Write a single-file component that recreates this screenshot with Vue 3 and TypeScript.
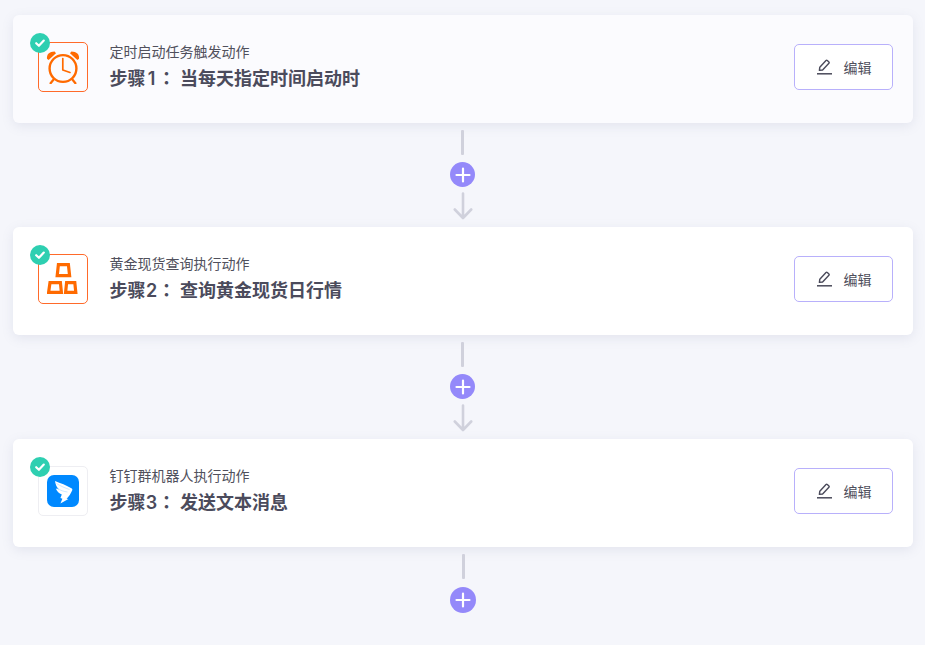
<script setup lang="ts">
interface Step {
  sub: string
  num: string
  title: string
  icon: 'clock' | 'gold' | 'ding'
  tint?: boolean
  arrow: boolean
}
const steps: Step[] = [
  { sub: '定时启动任务触发动作', num: '1', title: '当每天指定时间启动时', icon: 'clock', tint: true, arrow: true },
  { sub: '黄金现货查询执行动作', num: '2', title: '查询黄金现货日行情', icon: 'gold', arrow: true },
  { sub: '钉钉群机器人执行动作', num: '3', title: '发送文本消息', icon: 'ding', arrow: false },
]
</script>

<template>
  <main class="page">
    <template v-for="s in steps" :key="s.num">
      <section class="card" :class="{ tint: s.tint }">
        <div class="icon-wrap">
          <div class="icon-box" :class="{ plain: s.icon === 'ding' }">
            <svg v-if="s.icon === 'clock'" width="34" height="34" viewBox="0 0 34 34" fill="none" stroke="#ff6a00">
              <circle cx="17" cy="18.5" r="13.4" stroke-width="2.4" />
              <path d="M16.8 8.5V20L24 22.5" stroke-width="1.7" stroke-linecap="round" stroke-linejoin="round" />
              <path d="M1 8.8C0.4 4.4 3.4 1.4 8.6 1.4L10 3.2L2.6 10Z" fill="#ff6a00" stroke="none" />
              <path d="M33 8.8C33.6 4.4 30.6 1.4 25.4 1.4L24 3.2L31.4 10Z" fill="#ff6a00" stroke="none" />
              <path d="M8 29L4.6 33.2M26 29L29.4 33.2" stroke-width="2.2" stroke-linecap="round" />
            </svg>
            <svg v-else-if="s.icon === 'gold'" width="32" height="32" viewBox="0 0 32 32" fill="none" stroke="#ff6a00" stroke-width="3.2" stroke-linejoin="miter">
              <path d="M11.4 1.6H21.4L22.6 12.6H10.2Z" />
              <path d="M3 19.6H13.4L14.4 29.4H1.6Z" />
              <path d="M19.6 19.6H27.8L28.8 29.4H18.6Z" />
            </svg>
            <svg v-else width="32" height="32" viewBox="0 0 32 32">
              <rect width="32" height="32" rx="7" fill="#0089ff" />
              <path d="M8 6C13.5 8.2 19.5 10.4 24.4 13.2C25.6 13.8 25.6 14.8 25 15.8C23.6 18.8 21.8 21.8 19.6 23.8L21.4 24L13.4 28.6L15.4 23.8L13.4 23L14.8 19.6C12 18.6 10 16.6 8.8 13.6L12.2 14.6C10 12.6 8.4 9.6 8 6Z" fill="#fff" />
              <path d="M9.5 8.5C13.5 11 18 13 22.5 14.5M10.5 13.5C13.5 15.5 17 16.5 20.5 17" stroke="#b9dcff" stroke-width="0.7" fill="none" />
            </svg>
          </div>
          <span class="badge">
            <svg width="12" height="12" viewBox="0 0 12 12" fill="none" stroke="#fff" stroke-width="2.2" stroke-linecap="round" stroke-linejoin="round">
              <path d="M2.2 6.2L4.9 8.8L9.8 3.6" />
            </svg>
          </span>
        </div>
        <div class="text">
          <div class="sub">{{ s.sub }}</div>
          <div class="title">步骤<span class="num">{{ s.num }}</span><span class="colon">：</span><span class="name">{{ s.title }}</span></div>
        </div>
        <button class="edit" type="button">
          <svg width="16" height="16" viewBox="0 0 16 16" fill="none" stroke="#4a4a5a" stroke-width="1.4" stroke-linejoin="round">
            <path d="M3.4 11.4L3.8 8.2L10 1.6C10.4 1.2 10.9 1.2 11.3 1.5L12.9 3C13.3 3.4 13.3 3.9 12.9 4.3L6.6 11Z" />
            <path d="M1 14.8H16" stroke-width="1.5" />
          </svg>
          <span>编辑</span>
        </button>
      </section>
      <div class="connector" :class="{ last: !s.arrow }">
        <span class="line"></span>
        <span class="plus">
          <svg width="16" height="16" viewBox="0 0 16 16" stroke="#fff" stroke-width="2.2" stroke-linecap="round">
            <path d="M8 1.5V14.5M1.5 8H14.5" />
          </svg>
        </span>
        <svg v-if="s.arrow" class="arrow" width="20" height="28" viewBox="0 0 20 28" fill="none" stroke="#d0d1dc" stroke-width="2.6" stroke-linecap="round" stroke-linejoin="round">
          <path d="M10 1.5V25.5M1.8 17.5L10 26L18.2 17.5" />
        </svg>
      </div>
    </template>
  </main>
</template>

<style>
html, body { margin: 0; background: #f5f6fb; }
</style>

<style scoped>
.page {
  box-sizing: border-box;
  width: 925px;
  height: 645px;
  overflow: hidden;
  padding: 15px 12px 0 13px;
  background: #f5f6fb;
  font-family: Inter, "Noto Sans CJK SC", "Noto Sans", sans-serif;
}
.card {
  box-sizing: border-box;
  height: 108px;
  display: flex;
  align-items: center;
  padding: 0 20px 0 25px;
  border-radius: 6px;
  background: #fff;
  box-shadow: 0 3px 12px rgba(120, 125, 160, 0.14);
}
.card.tint { background: #fbfbfe; }
.icon-wrap {
  position: relative;
  width: 50px;
  height: 50px;
  flex: none;
  margin-top: -4px;
}
.icon-box {
  box-sizing: border-box;
  width: 50px;
  height: 50px;
  display: flex;
  align-items: center;
  justify-content: center;
  border: 1px solid #ff6a2a;
  border-radius: 5px;
  background: #fff;
}
.card.tint .icon-box { background: #fbfbfe; }
.icon-box.plain { border-color: #eeeef2; }
.badge {
  position: absolute;
  left: -8px;
  top: -9px;
  width: 20px;
  height: 20px;
  display: flex;
  align-items: center;
  justify-content: center;
  border-radius: 50%;
  background: #2ecfb1;
}
.text {
  flex: 1;
  margin-left: 21.5px;
  margin-top: -4px;
}
.sub {
  font-size: 14px;
  line-height: 20px;
  color: #50505c;
}
.title {
  margin-top: 2px;
  font-size: 18px;
  line-height: 26px;
  font-weight: 600;
  color: #4b4b5c;
}
.num {
  display: inline-block;
  width: 12px;
  text-align: center;
}
.colon {
  font-family: "Noto Sans CJK TC", sans-serif;
}
.name { margin-left: 4.5px; }
.edit {
  box-sizing: border-box;
  width: 99px;
  height: 46px;
  display: flex;
  align-items: center;
  justify-content: center;
  gap: 12px;
  padding: 0;
  border: 1px solid #b8b0fb;
  border-radius: 5px;
  background: #fff;
  color: #4f4f5c;
  font-family: inherit;
  font-size: 14px;
  margin-top: -4px;
}
.connector {
  height: 104px;
  display: flex;
  flex-direction: column;
  align-items: center;
  padding-top: 7px;
  box-sizing: border-box;
  margin-right: 1px;
}
.line {
  width: 3px;
  height: 25px;
  border-radius: 1px;
  background: #d0d1dc;
}
.plus {
  width: 25px;
  height: 25px;
  margin-top: 7px;
  display: flex;
  align-items: center;
  justify-content: center;
  border-radius: 50%;
  background: #9489fa;
}
.connector.last { margin-right: 0; }
.connector.last .plus { width: 26px; height: 26px; margin-top: 8px; }
.arrow { margin-top: 5px; }
</style>
